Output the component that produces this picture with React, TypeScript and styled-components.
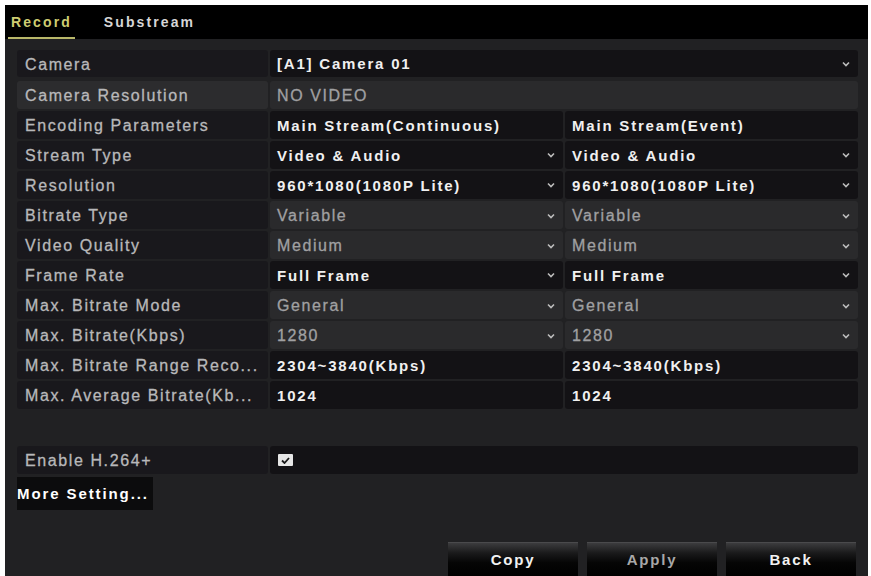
import { createGlobalStyle, styled } from "styled-components";

const Global = createGlobalStyle`
  html, body {
    margin: 0;
    padding: 0;
    background: #ffffff;
  }
  body {
    font-family: "Liberation Sans", Arial, sans-serif;
  }
`;

const Screen = styled.div`
  width: 871px;
  height: 576px;
  padding: 5px 3px 0 5px;
  box-sizing: border-box;
  background: #ffffff;
  overflow: hidden;
`;

const Panel = styled.div`
  height: 571px;
  display: flex;
  flex-direction: column;
  background: #212123;
`;

const TabBar = styled.div`
  height: 34px;
  display: flex;
  align-items: stretch;
  gap: 26px;
  padding-left: 3px;
  background: #000000;
  flex-shrink: 0;
`;

const Tab = styled.div<{ active?: boolean }>`
  display: flex;
  align-items: center;
  padding: 2px 3px 0;
  font-size: 14px;
  font-weight: bold;
  letter-spacing: 2.1px;
  color: ${(props) => (props.active ? "#cfcd72" : "#d6d6d6")};
  border-bottom: 2px solid ${(props) => (props.active ? "#b9b86a" : "transparent")};
`;

const Body = styled.div`
  flex: 1;
  display: flex;
  flex-direction: column;
  padding: 11px 10px 0 12px;
`;

const Table = styled.div`
  display: flex;
  flex-direction: column;
  gap: 2px;
`;

const Row = styled.div<{ top?: boolean }>`
  display: grid;
  grid-template-columns: 251px 1fr 1fr;
  column-gap: 2px;
  height: ${(props) => (props.top ? "27px" : "28px")};
  margin-bottom: ${(props) => (props.top ? "2px" : "0")};
`;

const Label = styled.div<{ dim?: boolean }>`
  display: flex;
  align-items: center;
  padding: 2px 0 0 8px;
  box-sizing: border-box;
  border-radius: 3px;
  background: ${(props) => (props.dim ? "#2c2c2e" : "#19181c")};
  color: #b8b8ba;
  font-size: 16px;
  letter-spacing: 1.6px;
  -webkit-text-stroke: 0.3px #b8b8ba;
  white-space: nowrap;
  overflow: hidden;
`;

const Cell = styled.div<{ dim?: boolean; span?: boolean }>`
  display: flex;
  align-items: center;
  justify-content: space-between;
  padding: ${(props) => (props.dim ? "2px 8px 0 7px" : "0 8px 0 7px")};
  box-sizing: border-box;
  border-radius: 3px;
  grid-column: ${(props) => (props.span ? "2 / 4" : "auto")};
  background: ${(props) => (props.dim ? "#2a2a2c" : "#131215")};
  color: ${(props) => (props.dim ? "#a0a0a2" : "#f0f0f0")};
  font-size: ${(props) => (props.dim ? "16px" : "15px")};
  font-weight: ${(props) => (props.dim ? "normal" : "bold")};
  letter-spacing: ${(props) => (props.dim ? "1.6px" : "1.8px")};
  -webkit-text-stroke: ${(props) => (props.dim ? "0.3px #a0a0a2" : "0")};
  white-space: nowrap;
  overflow: hidden;
`;

const Chevron = styled.svg`
  width: 8px;
  height: 6px;
  flex-shrink: 0;
`;

const Check = styled.div`
  width: 15px;
  height: 12px;
  margin-left: 1px;
  background: #e6e6e6;
  border-radius: 1px;
  display: flex;
  align-items: center;
  justify-content: center;
`;

const EnableRow = styled(Row)`
  margin-top: 37px;
`;

const MoreButton = styled.div`
  align-self: flex-start;
  margin-top: 3px;
  height: 33px;
  padding: 0 4px 0 0;
  display: flex;
  align-items: center;
  background: #0c0c0d;
  color: #ffffff;
  font-size: 15px;
  font-weight: bold;
  letter-spacing: 1.9px;
`;

const Footer = styled.div`
  margin-top: auto;
  display: flex;
  justify-content: flex-end;
  gap: 9px;
  padding-right: 2px;
`;

const Button = styled.div<{ muted?: boolean }>`
  width: 130px;
  height: 34px;
  display: flex;
  align-items: center;
  justify-content: center;
  background: linear-gradient(#3c3c3e 0%, #1a1a1b 30%, #050505 60%, #000000 100%);
  border-top: 1px solid #4a4a4c;
  box-sizing: border-box;
  color: ${(props) => (props.muted ? "#a8a8a8" : "#f2f2f2")};
  font-size: 15px;
  font-weight: bold;
  letter-spacing: 1.8px;
`;

type Value = { text: string; dim?: boolean; select?: boolean };

const rows: { label: string; values: Value[] }[] = [
  {
    label: "Encoding Parameters",
    values: [{ text: "Main Stream(Continuous)" }, { text: "Main Stream(Event)" }],
  },
  {
    label: "Stream Type",
    values: [
      { text: "Video & Audio", select: true },
      { text: "Video & Audio", select: true },
    ],
  },
  {
    label: "Resolution",
    values: [
      { text: "960*1080(1080P Lite)", select: true },
      { text: "960*1080(1080P Lite)", select: true },
    ],
  },
  {
    label: "Bitrate Type",
    values: [
      { text: "Variable", dim: true, select: true },
      { text: "Variable", dim: true, select: true },
    ],
  },
  {
    label: "Video Quality",
    values: [
      { text: "Medium", dim: true, select: true },
      { text: "Medium", dim: true, select: true },
    ],
  },
  {
    label: "Frame Rate",
    values: [
      { text: "Full Frame", select: true },
      { text: "Full Frame", select: true },
    ],
  },
  {
    label: "Max. Bitrate Mode",
    values: [
      { text: "General", dim: true, select: true },
      { text: "General", dim: true, select: true },
    ],
  },
  {
    label: "Max. Bitrate(Kbps)",
    values: [
      { text: "1280", dim: true, select: true },
      { text: "1280", dim: true, select: true },
    ],
  },
  {
    label: "Max. Bitrate Range Reco...",
    values: [{ text: "2304~3840(Kbps)" }, { text: "2304~3840(Kbps)" }],
  },
  {
    label: "Max. Average Bitrate(Kb...",
    values: [{ text: "1024" }, { text: "1024" }],
  },
];

function Arrow() {
  return (
    <Chevron viewBox="0 0 8 6">
      <path d="M1 1.5 L4 4.5 L7 1.5" fill="none" stroke="#bdbdbd" strokeWidth="1.6" />
    </Chevron>
  );
}

export default function App() {
  return (
    <>
      <Global />
      <Screen>
        <Panel>
          <TabBar>
            <Tab active>Record</Tab>
            <Tab>Substream</Tab>
          </TabBar>
          <Body>
            <Table>
              <Row top>
                <Label>Camera</Label>
                <Cell span>
                  [A1] Camera 01
                  <Arrow />
                </Cell>
              </Row>
              <Row>
                <Label dim>Camera Resolution</Label>
                <Cell span dim>
                  NO VIDEO
                </Cell>
              </Row>
              {rows.map((row) => (
                <Row key={row.label}>
                  <Label>{row.label}</Label>
                  {row.values.map((v, i) => (
                    <Cell key={i} dim={v.dim}>
                      {v.text}
                      {v.select && <Arrow />}
                    </Cell>
                  ))}
                </Row>
              ))}
            </Table>
            <EnableRow>
              <Label>Enable H.264+</Label>
              <Cell span>
                <Check>
                  <svg width="9" height="7" viewBox="0 0 9 7">
                    <path d="M1 3.5 L3.5 6 L8 1" fill="none" stroke="#1a1a1a" strokeWidth="1.8" />
                  </svg>
                </Check>
              </Cell>
            </EnableRow>
            <MoreButton>More Setting...</MoreButton>
            <Footer>
              <Button>Copy</Button>
              <Button muted>Apply</Button>
              <Button>Back</Button>
            </Footer>
          </Body>
        </Panel>
      </Screen>
    </>
  );
}
